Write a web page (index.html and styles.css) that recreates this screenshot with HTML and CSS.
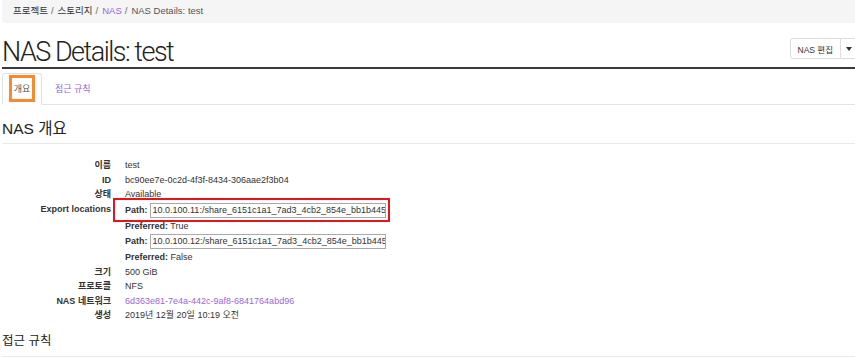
FILE: index.html
```html
<!DOCTYPE html>
<html lang="ko">

<head>
    <meta charset="UTF-8">
    <title>NAS Details: test</title>
    <link rel="stylesheet" href="styles.css">
</head>

<body>

    <div class="page">
        <ol class="crumbs">
            <li>프로젝트</li>
            <li>스토리지</li>
            <li><a href="#">NAS</a></li>
            <li class="current">NAS Details: test</li>
        </ol>

        <header class="page-header">
            <h1>NAS Details: test</h1>
            <div class="btn-group">
                <button class="btn">NAS 편집</button>
                <button class="btn toggle"><span class="caret"></span></button>
            </div>
        </header>

        <ul class="tabs">
            <li class="active"><span class="mark">개요</span></li>
            <li><a href="#">접근 규칙</a></li>
        </ul>

        <h2 class="section-title">NAS 개요</h2>

        <dl class="info">
            <dt>이름</dt>
            <dd>test</dd>
            <dt>ID</dt>
            <dd>bc90ee7e-0c2d-4f3f-8434-306aae2f3b04</dd>
            <dt>상태</dt>
            <dd>Available</dd>
            <dt>Export locations</dt>
            <dd>
                <div class="path marked"><b>Path:</b> <span class="field">10.0.100.11:/share_6151c1a1_7ad3_4cb2_854e_bb1b445</span></div>
                <div><b>Preferred:</b> True</div>
                <div class="path"><b>Path:</b> <span class="field">10.0.100.12:/share_6151c1a1_7ad3_4cb2_854e_bb1b445</span></div>
                <div><b>Preferred:</b> False</div>
            </dd>
            <dt>크기</dt>
            <dd>500 GiB</dd>
            <dt>프로토콜</dt>
            <dd>NFS</dd>
            <dt>NAS 네트워크</dt>
            <dd><a href="#">6d363e81-7e4a-442c-9af8-6841764abd96</a></dd>
            <dt>생성</dt>
            <dd>2019년 12월 20일 10:19 오전</dd>
        </dl>

        <h3 class="section-title small">접근 규칙</h3>
    </div>

</body>

</html>
```

FILE: styles.css
```css
html,
body {
    margin: 0;
    overflow: hidden;
    background: #fff;
}

body {
    font-family: "Liberation Sans", Arial, "Noto Sans CJK KR", sans-serif;
    font-size: 9px;
    color: #333;
}

a {
    color: #9966e0;
    text-decoration: none;
}

.page {
    margin-left: 2px;
    margin-right: -8px;
}

/* breadcrumb */
.crumbs {
    display: flex;
    margin: 0;
    padding: 0 0 0 11px;
    height: 23px;
    line-height: 22px;
    list-style: none;
    background-color: #f5f5f5;
    border-radius: 0 0 3px 3px;
    font-size: 9.5px;
    color: #333;
}

.crumbs li + li::before {
    content: "/";
    padding: 0 4px 0 3px;
    color: #666;
}

.crumbs .current {
    color: #555;
}

/* title */
.page-header {
    display: flex;
    justify-content: space-between;
    align-items: flex-start;
    margin-top: 14px;
    border-bottom: 2px solid #3a3a3a;
}

h1 {
    margin: 0;
    font-family: Roboto, "Liberation Sans", sans-serif;
    font-weight: 300;
    font-size: 27px;
    line-height: 30px;
    letter-spacing: -1.5px;
    color: #222;
}

.btn-group {
    display: flex;
    margin-top: 1px;
}

.btn {
    height: 21px;
    padding: 0 7px;
    border: 1px solid #ddd;
    background: #fff;
    font-family: "Liberation Sans", "Noto Sans CJK KR", sans-serif;
    font-size: 8.5px;
    color: #333;
    border-radius: 3px 0 0 3px;
}

.btn.toggle {
    width: 22px;
    padding: 0 0 0 5px;
    border-left: 0;
    border-radius: 0 3px 3px 0;
    text-align: left;
}

.caret {
    display: inline-block;
    border-top: 4px solid #333;
    border-left: 3px solid transparent;
    border-right: 3px solid transparent;
    vertical-align: middle;
}

/* tabs */
.tabs {
    display: flex;
    margin: 0;
    padding: 4px 0 0 0;
    list-style: none;
    border-bottom: 1px solid #e3e3e3;
}

.tabs li {
    display: flex;
    align-items: center;
    margin-bottom: -1px;
    padding: 1px 6px 2px;
    border: 1px solid transparent;
    border-radius: 3px 3px 0 0;
}

.tabs li + li {
    margin-left: 2px;
    padding: 1px 10px 2px;
}

.tabs .active {
    border-color: #e3e3e3;
    border-bottom-color: #fff;
    background: #fff;
}

.mark {
    display: flex;
    align-items: center;
    justify-content: center;
    width: 20px;
    height: 21px;
    border: 3px solid #f68a2c;
    color: #555;
}

/* headings */
.section-title {
    margin: 15px 0 0 0;
    padding-bottom: 5px;
    border-bottom: 1px solid #eaeaea;
    font-weight: normal;
    font-size: 15.5px;
    line-height: 18px;
    color: #222;
}

.section-title.small {
    margin-top: 10px;
    padding-bottom: 7px;
    font-size: 12.5px;
    line-height: 16px;
}

/* detail list */
.info {
    display: grid;
    grid-template-columns: 109px 1fr;
    column-gap: 14px;
    margin: 14px 0 0 0;
    line-height: 14.5px;
}

.info dt {
    font-weight: bold;
    text-align: right;
}

.info dd {
    margin: 0;
}

.path {
    display: flex;
    align-items: center;
    gap: 2px;
    width: 261px;
    height: 17px;
}

.marked {
    position: relative;
}

.marked::after {
    content: "";
    position: absolute;
    top: -4px;
    bottom: -3px;
    left: -12px;
    right: -4px;
    border: 2px solid #e8141b;
}

.field {
    box-sizing: border-box;
    width: 237px;
    height: 15px;
    padding: 0 2px;
    border: 1px solid #a9a9a9;
    line-height: 13px;
    white-space: nowrap;
    overflow: hidden;
}
```
